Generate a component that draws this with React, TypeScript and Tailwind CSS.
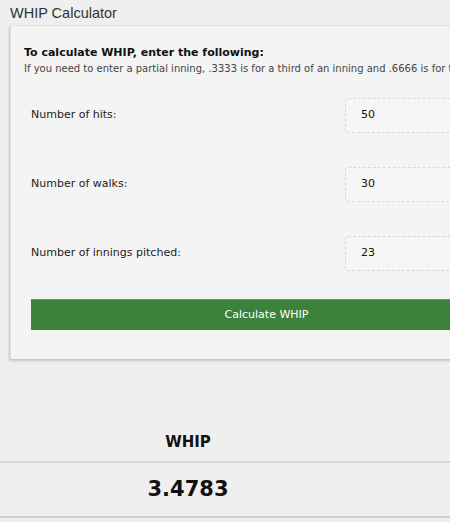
export default function App() {
  const rows = [
    { label: 'Number of hits:', value: '50' },
    { label: 'Number of walks:', value: '30' },
    { label: 'Number of innings pitched:', value: '23' },
  ]

  return (
    <div className="w-[450px] h-[522px] overflow-hidden bg-[#efefef]">
      <div className="w-[540px]">
        {/* Title */}
        <h1 className="pl-[10px] pt-[3px] h-[25px] text-[14.5px] leading-[20px] text-[#333] font-['Liberation_Sans',Arial,sans-serif]">
          WHIP Calculator
        </h1>

        {/* Form card */}
        <div className="ml-[10px] w-[512px] bg-[#f4f4f4] border-l border-t border-[#e2e2e2] shadow-[-1px_2px_2px_rgba(0,0,0,0.18)] pt-[20px] pb-[29px] font-['DejaVu_Sans','Verdana',sans-serif]">
          <div className="pl-[13px]">
            <p className="text-[11px] leading-[14px] font-bold text-[#111]">
              To calculate WHIP, enter the following:
            </p>
            <p className="mt-[3px] text-[10px] leading-[12px] text-[#444] whitespace-nowrap">
              If you need to enter a partial inning, .3333 is for a third of an inning and .6666 is for two thirds of an inning.
            </p>
          </div>

          <div className="pl-[20px] pr-[20px] mt-[23px] flex flex-col gap-[34px]">
            {rows.map((r) => (
              <div key={r.label} className="flex items-center justify-between h-[35px]">
                <span className="text-[11px] text-[#222]">{r.label}</span>
                <div className="w-[157px] h-[35px] rounded-[3px] border border-dashed border-[#d8d8d8] bg-[#f6f6f6] flex items-center pl-[15px] text-[11px] text-[#111]">
                  {r.value}
                </div>
              </div>
            ))}

            <button className="-mt-[6px] h-[31px] w-full bg-[#3b823b] border-t border-[#5a9a5a] text-white text-[11px] flex items-center justify-center">
              Calculate WHIP
            </button>
          </div>
        </div>

        {/* Result table */}
        <div className="mt-[72px] font-['DejaVu_Sans','Verdana',sans-serif]">
          <div className="h-[30px] flex">
            <div className="w-[376px] text-center text-[15px] font-bold text-[#111] leading-[18px] pt-[2px]">
              WHIP
            </div>
          </div>
          <div className="border-t-2 border-[#d6d6d6] border-b-2 border-b-[#cfcfcf] h-[57px] flex items-center">
            <div className="w-[376px] text-center text-[21px] font-bold text-[#111]">
              3.4783
            </div>
          </div>
        </div>
      </div>
    </div>
  )
}
